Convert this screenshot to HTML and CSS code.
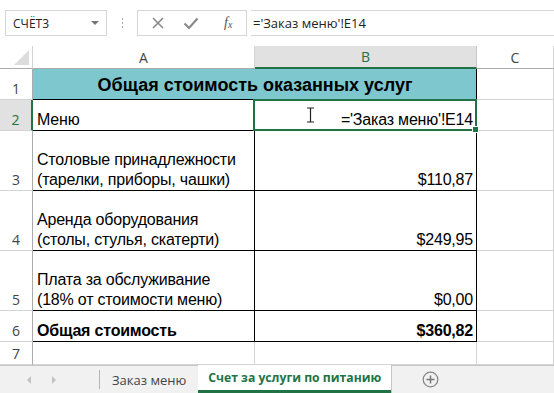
FILE: index.html
```html
<!DOCTYPE html>
<html lang="ru">
<head>
  <meta charset="UTF-8">
  <title>Счет за услуги по питанию</title>
  <link rel="stylesheet" href="styles.css">
</head>
<body>
  <!-- Formula bar -->
  <div class="formula-bar">
    <div class="name-box">
      <span>СЧЁТ3</span>
      <span class="name-arrow"></span>
    </div>
    <div class="grip"><i></i><i></i><i></i></div>
    <div class="fx-tools">
      <svg class="tool" width="14" height="14" viewBox="0 0 14 14"><path d="M2 2 L12 12 M12 2 L2 12" stroke="#8a8a8a" stroke-width="1.6"/></svg>
      <svg class="tool" width="16" height="14" viewBox="0 0 16 14"><path d="M1.5 7.5 L6 12 L14.5 2.5" fill="none" stroke="#8a8a8a" stroke-width="2.2"/></svg>
      <span class="fx">f<sub>x</sub></span>
    </div>
    <div class="formula-input">='Заказ меню'!E14</div>
  </div>

  <!-- Sheet grid -->
  <div class="sheet">
    <div class="corner"><span class="corner-tri"></span></div>
    <div class="col-head">A</div>
    <div class="col-head active">B</div>
    <div class="col-head">C</div>

    <div class="row-head">1</div>
    <div class="cell title">Общая стоимость оказанных услуг</div>
    <div class="cell empty"></div>

    <div class="row-head active">2</div>
    <div class="cell">Меню</div>
    <div class="cell num selected">
      <svg class="ibeam" width="9" height="16" viewBox="0 0 9 16"><path d="M1 1 H8 M4.5 1 V15 M1 15 H8" stroke="#222" stroke-width="1.2" fill="none"/></svg>
      ='Заказ меню'!E14
    </div>
    <div class="cell empty"></div>

    <div class="row-head">3</div>
    <div class="cell">Столовые принадлежности<br>(тарелки, приборы, чашки)</div>
    <div class="cell num">$110,87</div>
    <div class="cell empty"></div>

    <div class="row-head">4</div>
    <div class="cell">Аренда оборудования<br>(столы, стулья, скатерти)</div>
    <div class="cell num">$249,95</div>
    <div class="cell empty"></div>

    <div class="row-head">5</div>
    <div class="cell">Плата за обслуживание<br>(18% от стоимости меню)</div>
    <div class="cell num">$0,00</div>
    <div class="cell empty"></div>

    <div class="row-head">6</div>
    <div class="cell bold">Общая стоимость</div>
    <div class="cell num bold">$360,82</div>
    <div class="cell empty"></div>

    <div class="row-head">7</div>
    <div class="cell empty"></div>
    <div class="cell empty"></div>
    <div class="cell empty"></div>
  </div>

  <!-- Sheet tabs -->
  <div class="tabs">
    <div class="tab-nav">
      <span class="nav-left"></span>
      <span class="nav-right"></span>
    </div>
    <div class="tab">Заказ меню</div>
    <div class="tab current">Счет за услуги по питанию</div>
    <div class="tab-rest">
      <svg width="17" height="17" viewBox="0 0 17 17"><circle cx="8.5" cy="8.5" r="7.3" fill="none" stroke="#888" stroke-width="1.3"/><path d="M8.5 4.5 V12.5 M4.5 8.5 H12.5" stroke="#777" stroke-width="1.5"/></svg>
    </div>
  </div>
</body>
</html>
```

FILE: styles.css
```css
/* General */
body {
  margin: 0;
  width: 554px;
  height: 393px;
  overflow: hidden;
  background: #fff;
  font-family: 'Liberation Sans', Arial, sans-serif;
  color: #000;
}

/* Formula bar */
.formula-bar {
  height: 46px;
  display: flex;
  align-items: flex-start;
  padding-top: 10px;
  box-sizing: border-box;
  font-family: 'Open Sans', 'Noto Sans', sans-serif;
  font-size: 12px;
  color: #222;
}

.name-box {
  width: 102px;
  height: 26px;
  margin-left: 5px;
  border: 1px solid #d6d6d6;
  box-sizing: border-box;
  display: flex;
  align-items: center;
  justify-content: space-between;
  padding: 0 7px 0 7px;
}

.name-arrow {
  width: 0;
  height: 0;
  border-left: 4px solid transparent;
  border-right: 4px solid transparent;
  border-top: 4px solid #777;
}

.grip {
  width: 30px;
  height: 26px;
  display: flex;
  flex-direction: column;
  align-items: center;
  justify-content: center;
  gap: 2px;
}

.grip i {
  width: 1px;
  height: 2px;
  background: #aaa;
}

.fx-tools {
  width: 110px;
  height: 26px;
  border: 1px solid #d6d6d6;
  box-sizing: border-box;
  display: flex;
  align-items: center;
  padding-left: 13px;
  gap: 18px;
}

.fx {
  font-family: 'Liberation Serif', serif;
  font-style: italic;
  font-size: 14px;
  color: #555;
  margin-left: 7px;
}

.fx sub {
  font-size: 10px;
  vertical-align: -1px;
}

.formula-input {
  flex: 1;
  height: 26px;
  margin-left: 4px;
  border-top: 1px solid #d6d6d6;
  border-bottom: 1px solid #d6d6d6;
  box-sizing: border-box;
  padding-left: 2px;
  line-height: 24px;
  font-size: 13px;
}

/* Sheet */
.sheet {
  display: grid;
  grid-template-columns: 33px 222px 222px 77px;
  grid-template-rows: 23px 31px 31px 60px 60px 60px 31px 23px;
}

.sheet > div {
  box-sizing: border-box;
}

.corner {
  border-right: 1px solid #d4d4d4;
  border-bottom: 1px solid #ababab;
  position: relative;
}

.corner-tri {
  position: absolute;
  right: 3px;
  bottom: 3px;
  width: 0;
  height: 0;
  border-left: 15px solid transparent;
  border-bottom: 15px solid #dcdcdc;
}

.col-head {
  display: flex;
  align-items: center;
  justify-content: center;
  font-family: 'Open Sans', 'Noto Sans', sans-serif;
  font-size: 14px;
  color: #444;
  border-right: 1px solid #d4d4d4;
  border-bottom: 1px solid #ababab;
}

.col-head.active {
  background: #e1e1e1;
  color: #217346;
  border-right-color: #c6c6c6;
  border-bottom: 2px solid #217346;
}

.row-head {
  display: flex;
  align-items: flex-end;
  justify-content: center;
  padding-bottom: 1px;
  font-family: 'Open Sans', 'Noto Sans', sans-serif;
  font-size: 14px;
  color: #444;
  border-right: 1px solid #ababab;
  border-bottom: 1px solid #d4d4d4;
}

.row-head.active {
  background: #e1e1e1;
  color: #217346;
  border-right: 2px solid #217346;
}

.cell {
  display: flex;
  align-items: flex-end;
  padding: 0 3px 0 4px;
  font-size: 16px;
  letter-spacing: -0.2px;
  line-height: 20px;
  border-right: 1px solid #000;
  border-bottom: 1px solid #000;
}

.cell.empty {
  border-right: 1px solid #d4d4d4;
  border-bottom: 1px solid #d4d4d4;
}

.cell.title {
  grid-column: span 2;
  justify-content: center;
  align-items: center;
  background: #7fc7cf;
  font-weight: bold;
  font-size: 18px;
  letter-spacing: 0;
  padding-top: 2px;
}

.cell.num {
  justify-content: flex-end;
}

.cell.bold {
  font-weight: bold;
}

.cell.selected {
  position: relative;
}

.cell.selected::after {
  content: "";
  position: absolute;
  left: -2px;
  top: -1px;
  right: -1px;
  bottom: -1px;
  border: 2px solid #217346;
}

.cell.selected::before {
  content: "";
  position: absolute;
  right: -3px;
  bottom: -3px;
  width: 5px;
  height: 5px;
  background: #217346;
  border: 1px solid #fff;
  z-index: 1;
}

.ibeam {
  position: absolute;
  left: 51px;
  top: 7px;
}

/* Sheet tabs */
.tabs {
  height: 28px;
  display: flex;
  background: #f1f1f1;
  border-top: 1px solid #c6c6c6;
  box-sizing: border-box;
  font-family: 'Open Sans', 'Noto Sans', sans-serif;
  font-size: 13px;
}

.tab-nav {
  width: 100px;
  display: flex;
  align-items: center;
  padding-left: 27px;
  gap: 21px;
  box-sizing: border-box;
  border-right: 1px solid #b4b4b4;
  margin: 4px 0 4px;
}

.nav-left {
  width: 0;
  height: 0;
  border-top: 4px solid transparent;
  border-bottom: 4px solid transparent;
  border-right: 4px solid #c4c4c4;
}

.nav-right {
  width: 0;
  height: 0;
  border-top: 4px solid transparent;
  border-bottom: 4px solid transparent;
  border-left: 4px solid #c4c4c4;
}

.tab {
  padding: 0 12px;
  display: flex;
  align-items: center;
  color: #444;
}

.tab.current {
  background: #fff;
  color: #217346;
  font-weight: bold;
  font-size: 12.2px;
  padding: 0 10px;
  margin-top: -1px;
  border-bottom: 3px solid #217346;
  box-shadow: 1px 0 0 #c6c6c6;
}

.tab-rest {
  flex: 1;
  display: flex;
  align-items: center;
  padding-left: 31px;
}
```
